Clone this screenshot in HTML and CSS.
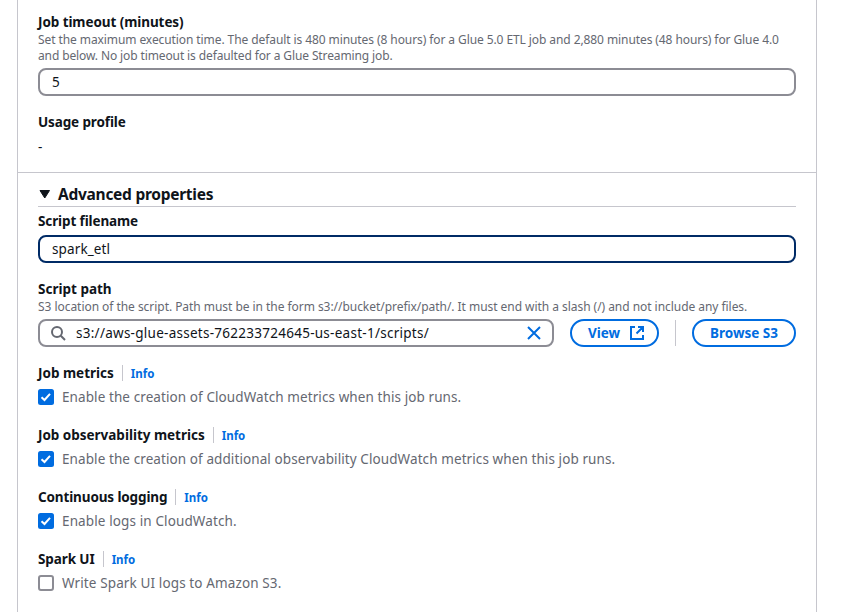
FILE: index.html
```
<!DOCTYPE html>
<html lang="en">
<head>
<meta charset="utf-8">
<title>Job details</title>
<link rel="stylesheet" href="styles.css">
</head>
<body>
<main class="panel">
  <section class="basic">
    <div class="label"><span class="t-timeout">Job timeout (minutes)</span></div>
    <div class="hint"><span class="h-one">Set the maximum execution time. The default is 480 minutes (8 hours) for a Glue 5.0 ETL job and 2,880 minutes (48 hours) for Glue 4.0</span><br><span class="h-two">and below. No job timeout is defaulted for a Glue Streaming job.</span></div>
    <div class="input"><span>5</span></div>
    <div class="label profile"><span class="t-profile">Usage profile</span></div>
    <div class="dash">-</div>
  </section>
  <section class="advanced">
    <h2 class="heading"><svg class="caret" viewBox="0 0 12 10"><path d="M2 1.500h9.500L6.750 9z"/></svg><span class="t-adv">Advanced properties</span></h2>
    <div class="label"><span class="t-file">Script filename</span></div>
    <div class="input focused"><span class="v-file">spark_etl</span></div>
    <div class="label path"><span class="t-path">Script path</span></div>
    <div class="hint"><span class="h-path">S3 location of the script. Path must be in the form s3://bucket/prefix/path/. It must end with a slash (/) and not include any files.</span></div>
    <div class="path-row">
      <div class="input search">
        <svg class="icon grey" viewBox="0 0 16 16"><circle cx="7" cy="7" r="5"/><path d="M10.800 10.800L15 15"/></svg>
        <span class="v-path">s3://aws-glue-assets-762233724645-us-east-1/scripts/</span>
        <svg class="icon clear" viewBox="0 0 16 16"><path d="M2 2l12 12M14 2L2 14"/></svg>
      </div>
      <div class="button view"><span class="b-view">View</span><svg class="icon" viewBox="0 0 16 16"><path d="M6 2H2v12h12v-4M9 2h5v5M14 2L7.500 8.500"/></svg></div>
      <div class="rule"></div>
      <div class="button browse"><span class="b-browse">Browse S3</span></div>
    </div>
    <div class="group">
      <div class="label"><span class="t-metrics">Job metrics</span><span class="info">Info</span></div>
      <div class="check-row"><svg class="box" viewBox="0 0 16 16"><rect class="on" width="16" height="16" rx="2.500"/><path d="M3.500 8.200l3 2.800L12 4.800"/></svg><span class="c-metrics">Enable the creation of CloudWatch metrics when this job runs.</span></div>
    </div>
    <div class="group">
      <div class="label"><span class="t-obs">Job observability metrics</span><span class="info">Info</span></div>
      <div class="check-row"><svg class="box" viewBox="0 0 16 16"><rect class="on" width="16" height="16" rx="2.500"/><path d="M3.500 8.200l3 2.800L12 4.800"/></svg><span class="c-obs">Enable the creation of additional observability CloudWatch metrics when this job runs.</span></div>
    </div>
    <div class="group">
      <div class="label"><span class="t-log">Continuous logging</span><span class="info">Info</span></div>
      <div class="check-row"><svg class="box" viewBox="0 0 16 16"><rect class="on" width="16" height="16" rx="2.500"/><path d="M3.500 8.200l3 2.800L12 4.800"/></svg><span class="c-log">Enable logs in CloudWatch.</span></div>
    </div>
    <div class="group">
      <div class="label"><span class="t-spark">Spark UI</span><span class="info">Info</span></div>
      <div class="check-row"><svg class="box" viewBox="0 0 16 16"><rect class="off" x="1" y="1" width="14" height="14" rx="2"/></svg><span class="c-spark">Write Spark UI logs to Amazon S3.</span></div>
    </div>
  </section>
</main>
</body>
</html>
```
FILE: styles.css
```
* { box-sizing: border-box; }
body { margin: 0; height: 612px; overflow: hidden; background: #fff; color: #0f141a; font: 13.5px/20px "Noto Sans", sans-serif; }
.panel { width: 800px; height: 612px; margin-left: 17px; border: solid #c6c6cd; border-width: 0 1px; }
.basic { height: 173px; padding: 12px 20px 0; border-bottom: 1px solid #c6c6cd; }
.advanced { padding: 11px 20px 0; }
.label { display: flex; height: 20px; font-size: 13.5px; font-weight: 700; white-space: nowrap; }
.hint { font-size: 12px; line-height: 16px; color: #656871; white-space: nowrap; }
.input { display: flex; align-items: center; height: 28px; margin-top: 4px; padding: 0 12px; border: 2px solid #8c8c94; border-radius: 8px; white-space: nowrap; }
.focused { border-color: #002b66; }
.profile, .path { margin-top: 16px; }
.dash { margin-top: 5px; }
.heading { display: flex; align-items: center; gap: 8px; height: 23px; margin: 0 0 4px; padding-bottom: 2px; border-bottom: 1px solid #c6c6cd; font-size: 15.5px; line-height: 20px; font-weight: 700; }
.caret { width: 12px; height: 10px; overflow: visible; fill: #0f141a; stroke: #0f141a; stroke-linejoin: round; }
.path-row { display: flex; align-items: center; height: 28px; margin-top: 4px; }
.search { width: 516px; margin: 0; padding: 0 10px; }
.icon { flex: none; width: 16px; height: 16px; fill: none; stroke: #006ce0; stroke-width: 2; }
.grey { stroke: #656871; margin-right: 10px; }
.clear { margin-left: auto; }
.button { display: flex; align-items: center; justify-content: center; height: 28px; border: 2px solid #006ce0; border-radius: 14px; color: #006ce0; font-weight: 700; white-space: nowrap; }
.view { width: 89px; margin-left: 16px; padding-left: 4px; gap: 9px; }
.browse { width: 104px; margin-left: 16px; }
.rule { width: 1px; height: 26px; margin-left: 16px; background: #c6c6cd; }
.group { height: 46px; margin-top: 16px; }
.info { height: 16px; margin: 2px 0 0 8px; padding-left: 8px; border-left: 1px solid #c6c6cd; color: #006ce0; font-size: 11.5px; line-height: 17px; }
.check-row { display: flex; align-items: center; gap: 8px; height: 20px; margin-top: 4px; color: #656871; white-space: nowrap; }
.box { flex: none; width: 16px; height: 16px; }
.box path { fill: none; stroke: #fff; stroke-width: 2; }
.on { fill: #006ce0; }
.off { fill: #fff; stroke: #8c8c94; stroke-width: 2; }

/* Per-string tracking */
.t-timeout { letter-spacing: -0.08px; }
.h-one { letter-spacing: -0.087px; }
.h-two { letter-spacing: -0.115px; }
.t-profile { letter-spacing: -0.12px; }
.t-adv { letter-spacing: -0.27px; }
.t-file { letter-spacing: -0.12px; }
.v-file { letter-spacing: 0.12px; }
.h-path { letter-spacing: -0.046px; }
.v-path { letter-spacing: 0.265px; }
.t-obs { letter-spacing: -0.02px; }
.t-log { letter-spacing: -0.13px; }
.t-spark { letter-spacing: -0.1px; }
.c-metrics, .c-obs { letter-spacing: 0.09px; }
.c-log, .c-spark { letter-spacing: 0.12px; }
```
